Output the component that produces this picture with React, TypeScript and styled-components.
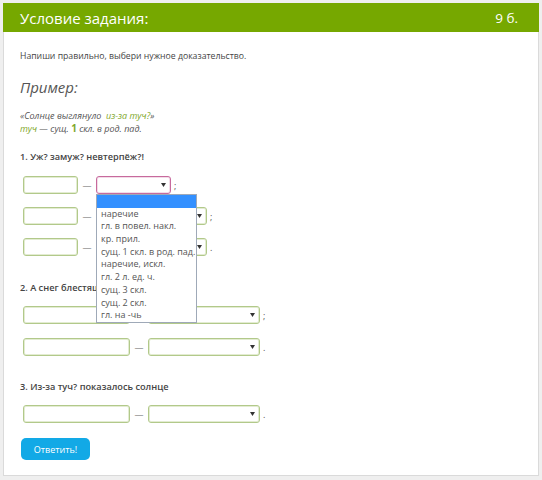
import styled, { createGlobalStyle } from "styled-components"

const Global = createGlobalStyle`
body {
  margin: 0;
  padding: 3px;
  background: #efefef;
  font-family: "Open Sans", "Noto Sans", sans-serif;
}
`

const options = [
  "",
  "наречие",
  "гл. в повел. накл.",
  "кр. прил.",
  "сущ. 1 скл. в род. пад.",
  "наречие, искл.",
  "гл. 2 л. ед. ч.",
  "сущ. 3 скл.",
  "сущ. 2 скл.",
  "гл. на -чь",
]

const Arrow = () => (
  <svg width="5" height="4" viewBox="0 0 5 4">
    <path d="M0 0 L5 0 L2.5 4 Z" fill="#333" />
  </svg>
)

type RowProps = { inputW: number; selectW: number; end: string; focused?: boolean; open?: boolean }

const AnswerRow = ({ inputW, selectW, end, focused, open }: RowProps) => (
  <Row>
    <Input $w={inputW} />
    <Dash>—</Dash>
    <SelectWrap>
      <Select $w={selectW} $focused={focused}>
        <Arrow />
      </Select>
      {open && (
        <List>
          {options.map((o, i) => (
            <Item key={i} $active={i === 0}>{o}</Item>
          ))}
        </List>
      )}
    </SelectWrap>
    <End>{end}</End>
  </Row>
)

const App = () => {
  return (
    <>
      <Global />
      <Card>
        <Header>
          <span>Условие задания:</span>
          <Points>9 б.</Points>
        </Header>
        <Body>
          <Instruction>Напиши правильно, выбери нужное доказательство.</Instruction>
          <Example>Пример:</Example>
          <Quote>
            <div>«Солнце выглянуло&nbsp; <Green>из-за туч?</Green>»</div>
            <div><Green>туч</Green> — сущ. <Num>1</Num> скл. в род. пад.</div>
          </Quote>

          <Question $top={15}>1. Уж? замуж? невтерпёж?!</Question>
          <Rows $top={12} $gap={13}>
            <AnswerRow inputW={55} selectW={75} end=";" focused open />
            <AnswerRow inputW={55} selectW={111} end=";" />
            <AnswerRow inputW={55} selectW={111} end="." />
          </Rows>

          <Question $top={25}>2. А снег блестящ? на солнце</Question>
          <Rows $top={11} $gap={14}>
            <AnswerRow inputW={107} selectW={112} end=";" />
            <AnswerRow inputW={107} selectW={112} end="." />
          </Rows>

          <Question $top={24}>3. Из-за туч? показалось солнце</Question>
          <Rows $top={11} $gap={14}>
            <AnswerRow inputW={107} selectW={112} end="." />
          </Rows>

          <Button>Ответить!</Button>
        </Body>
      </Card>
    </>
  )
}

export default App

const Card = styled.div`
width: 536px;
height: 473px;
box-sizing: border-box;
background: #fff;
border: 1px solid #dadada;
border-top: none;
`
const Header = styled.div`
height: 29px;
margin: 0 -1px;
background: #76a800;
color: #fff;
font-size: 15px;
display: flex;
align-items: center;
justify-content: space-between;
padding: 0 21px 0 17px;
`
const Points = styled.span`
font-size: 13.5px;
`
const Body = styled.div`
padding: 0 16px;
color: #555;
`
const Instruction = styled.div`
margin-top: 16px;
font-size: 8.7px;
line-height: 16px;
color: #444;
`
const Example = styled.div`
margin-top: 13px;
font-size: 15px;
line-height: 20px;
font-style: italic;
color: #555;
`
const Quote = styled.div`
margin-top: 13px;
font-size: 9px;
line-height: 12px;
font-style: italic;
color: #555;
`
const Green = styled.span`
color: #7fa82c;
`
const Num = styled.span`
color: #7fa82c;
font-style: normal;
font-weight: 700;
font-size: 10px;
`
const Question = styled.div<{ $top: number }>`
margin-top: ${(p) => p.$top}px;
font-size: 9.2px;
line-height: 14px;
font-weight: 600;
color: #444;
`
const Rows = styled.div<{ $top: number; $gap: number }>`
margin-top: ${(p) => p.$top}px;
margin-left: 3px;
display: flex;
flex-direction: column;
gap: ${(p) => p.$gap}px;
`
const Row = styled.div`
display: flex;
align-items: center;
height: 18px;
`
const Input = styled.div<{ $w: number }>`
width: ${(p) => p.$w}px;
height: 18px;
box-sizing: border-box;
border: 1px solid #b2c98a;
border-radius: 3px;
box-shadow: inset 0 0 0 1px #e3ecd2;
`
const Dash = styled.span`
width: 18px;
text-align: center;
font-size: 9px;
color: #666;
`
const SelectWrap = styled.div`
position: relative;
`
const Select = styled.div<{ $w: number; $focused?: boolean }>`
width: ${(p) => p.$w}px;
height: 18px;
box-sizing: border-box;
border: 1px solid ${(p) => (p.$focused ? "#c76a9d" : "#b2c98a")};
border-radius: 3px;
box-shadow: inset 0 0 0 1px ${(p) => (p.$focused ? "#f3dce8" : "#e3ecd2")};
display: flex;
align-items: center;
justify-content: flex-end;
padding-right: 4px;
`
const End = styled.span`
margin-left: 3px;
font-size: 9px;
color: #555;
`
const List = styled.div`
position: absolute;
left: 0;
top: 18px;
width: 101px;
box-sizing: border-box;
background: #fff;
border: 1px solid #9fa9b8;
z-index: 2;
`
const Item = styled.div<{ $active?: boolean }>`
height: 12.7px;
line-height: 12.7px;
padding-left: 4px;
font-size: 9px;
color: #555;
white-space: nowrap;
background: ${(p) => (p.$active ? "#3390ff" : "transparent")};
`
const Button = styled.div`
margin-top: 15px;
margin-left: 1px;
width: 69px;
height: 22px;
border-radius: 5px;
background: #12a9e6;
color: #fff;
font-size: 9px;
display: flex;
align-items: center;
justify-content: center;
`
